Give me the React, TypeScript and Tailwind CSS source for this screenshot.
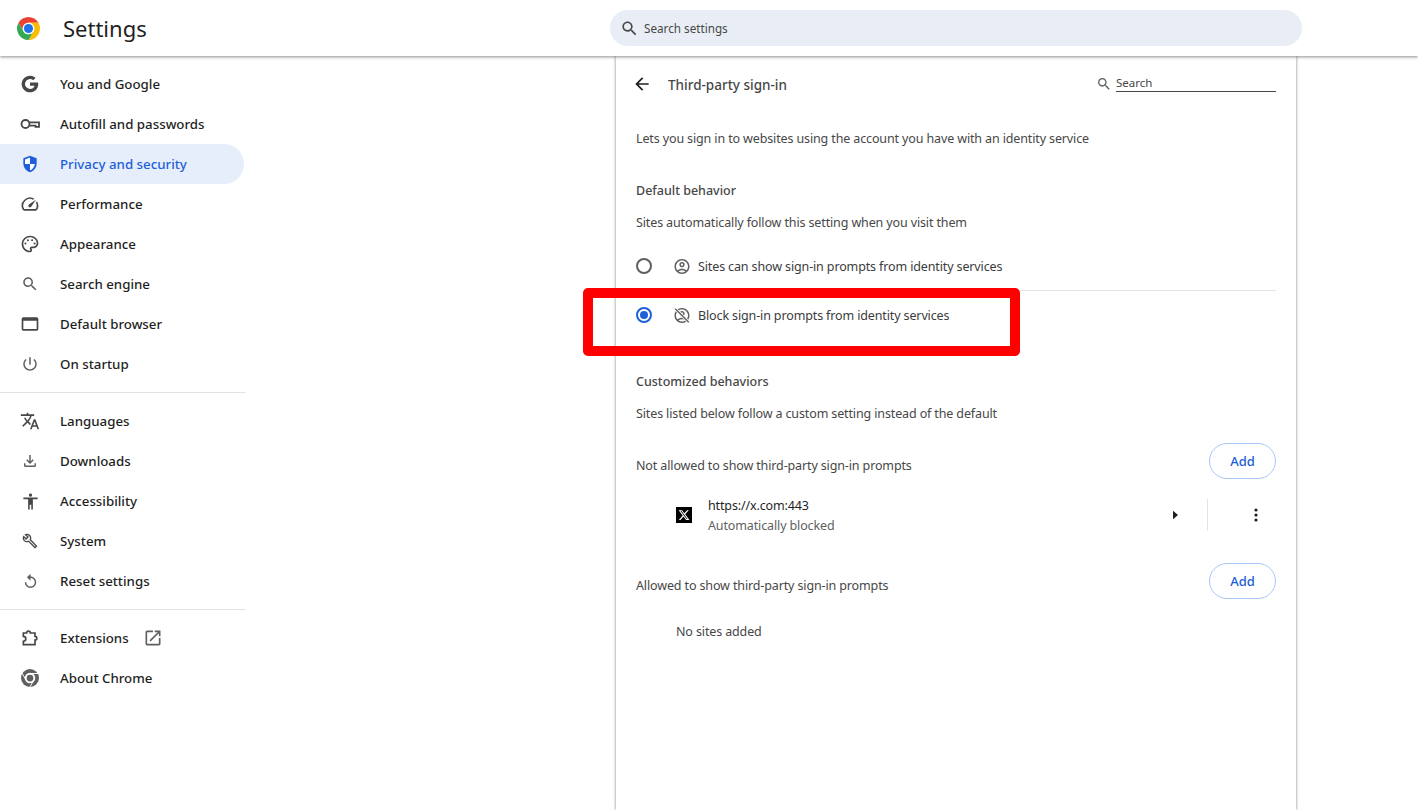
import type { ReactNode } from 'react';

const FONT = "font-['Noto_Sans',sans-serif]";

function Icon({ children, className = 'w-5 h-5 text-[#474747]' }: { children: ReactNode; className?: string }) {
  return (
    <svg viewBox="0 0 24 24" fill="currentColor" className={className}>
      {children}
    </svg>
  );
}

function ChromeLogo() {
  return (
    <svg viewBox="0 0 48 48" className="h-[23px] w-[23px]">
      <path fill="#ea4335" d="M3.22 12A24 24 0 0 1 44.78 12L24 12A12 12 0 0 0 13.6 30Z" />
      <path fill="#fbbc04" d="M44.78 12A24 24 0 0 1 24 48L34.4 30A12 12 0 0 0 24 12Z" />
      <path fill="#34a853" d="M24 48A24 24 0 0 1 3.22 12L13.6 30A12 12 0 0 0 34.4 30Z" />
      <circle cx="24" cy="24" r="12" fill="#fff" />
      <circle cx="24" cy="24" r="9.5" fill="#1a73e8" />
    </svg>
  );
}

function ChromeMono() {
  return (
    <svg viewBox="0 0 48 48" className="h-[18px] w-[18px] text-[#5f5f5f]">
      <circle cx="24" cy="24" r="24" fill="currentColor" />
      <circle cx="24" cy="24" r="14" fill="#fff" />
      <path stroke="#fff" strokeWidth="2.5" d="M24 12H46M34.4 30 23 49M13.6 30 2 10" />
      <circle cx="24" cy="24" r="9" fill="currentColor" />
    </svg>
  );
}

const searchPath =
  'M15.5 14h-.79l-.28-.27C15.41 12.59 16 11.11 16 9.5 16 5.91 13.09 3 9.5 3S3 5.91 3 9.5 5.91 16 9.5 16c1.61 0 3.09-.59 4.23-1.57l.27.28v.79l5 4.99L20.49 19l-4.99-5zm-6 0C7.01 14 5 11.99 5 9.5S7.01 5 9.5 5 14 7.01 14 9.5 11.99 14 9.5 14z';

const navIcons: Record<string, ReactNode> = {
  google: (
    <Icon>
      <path d="M21.6 10.2H12v3.9h5.5c-.6 2.4-2.7 3.9-5.5 3.9a6 6 0 1 1 3.9-10.6l2.8-2.8A10 10 0 1 0 12 22c5.2 0 9.9-3.7 9.9-10 0-.6-.1-1.2-.3-1.8z" />
    </Icon>
  ),
  key: (
    <svg viewBox="0 0 20 20" fill="none" stroke="currentColor" strokeWidth="1.8" className="h-5 w-5 text-[#474747]">
      <circle cx="5.5" cy="10" r="4" />
      <path d="M9.5 8.3H19V12.8H15.5V11.7H9.5" />
    </svg>
  ),
  shield: (
    <svg viewBox="0 0 24 24" className="h-5 w-5">
      <path fill="#1f5fd8" d="M12 2 4 5v6c0 5.1 3.4 9.6 8 11 4.6-1.4 8-5.9 8-11V5l-8-3z" />
      <path fill="#fff" d="M12 4.3 6 6.5V12h6V4.3zM12 12v7.8c3-1.1 5.3-4.3 5.9-7.8H12z" />
    </svg>
  ),
  speed: (
    <Icon>
      <path d="M20.38 8.57l-1.23 1.85a8 8 0 0 1-.22 7.58H5.07A8 8 0 0 1 15.58 6.85l1.85-1.23A10 10 0 0 0 3.35 19a2 2 0 0 0 1.72 1h13.85a2 2 0 0 0 1.74-1 10 10 0 0 0-.27-10.44z" />
      <path d="M10.59 15.41a2 2 0 0 0 2.83 0l5.66-8.49-8.49 5.66a2 2 0 0 0 0 2.83z" />
    </Icon>
  ),
  palette: (
    <Icon>
      <path d="M12 22C6.49 22 2 17.51 2 12S6.49 2 12 2s10 4.04 10 9c0 3.31-2.69 6-6 6h-1.77c-.28 0-.5.22-.5.5 0 .12.05.23.13.33.41.47.64 1.06.64 1.67A2.5 2.5 0 0 1 12 22zm0-18c-4.41 0-8 3.59-8 8s3.59 8 8 8c.28 0 .5-.22.5-.5a.54.54 0 0 0-.14-.35c-.41-.46-.63-1.05-.63-1.65a2.5 2.5 0 0 1 2.5-2.5H16c2.21 0 4-1.79 4-4 0-3.86-3.59-7-8-7z" />
      <circle cx="6.5" cy="11.5" r="1.2" />
      <circle cx="9.5" cy="7.5" r="1.2" />
      <circle cx="14.5" cy="7.5" r="1.2" />
      <circle cx="17.5" cy="11.5" r="1.2" />
    </Icon>
  ),
  search: (
    <Icon className="h-[18px] w-[18px] text-[#5f5f5f]">
      <path d={searchPath} />
    </Icon>
  ),
  browser: (
    <Icon>
      <path d="M20 4H4c-1.11 0-2 .9-2 2v12c0 1.1.89 2 2 2h16c1.1 0 2-.9 2-2V6c0-1.1-.89-2-2-2zm0 14H4V8h16v10z" />
    </Icon>
  ),
  power: (
    <Icon className="h-[18px] w-[18px] text-[#5f5f5f]">
      <path d="M13 3h-2v10h2V3zm4.83 2.17l-1.42 1.42C17.99 7.86 19 9.81 19 12c0 3.87-3.13 7-7 7s-7-3.13-7-7c0-2.19 1.01-4.14 2.58-5.42L6.17 5.17C4.23 6.82 3 9.26 3 12c0 4.97 4.03 9 9 9s9-4.03 9-9c0-2.74-1.23-5.18-3.17-6.83z" />
    </Icon>
  ),
  translate: (
    <Icon>
      <path d="M12.87 15.07l-2.54-2.51.03-.03c1.74-1.94 2.98-4.17 3.71-6.53H17V4h-7V2H8v2H1v1.99h11.17C11.5 7.92 10.44 9.75 9 11.35 8.07 10.32 7.3 9.19 6.69 8h-2c.73 1.63 1.73 3.17 2.98 4.56l-5.09 5.02L4 19l5-5 3.11 3.11.76-2.04zM18.5 10h-2L12 22h2l1.12-3h4.75L21 22h2l-4.5-12zm-2.62 7l1.62-4.33L19.12 17h-3.24z" />
    </Icon>
  ),
  download: (
    <Icon className="h-[18px] w-[18px] text-[#5f5f5f]">
      <path d="M18 15v3H6v-3H4v3c0 1.1.9 2 2 2h12c1.1 0 2-.9 2-2v-3h-2zm-1-4l-1.41-1.41L13 12.17V4h-2v8.17L8.41 9.59 7 11l5 5 5-5z" />
    </Icon>
  ),
  accessibility: (
    <Icon className="h-[19px] w-[19px] text-[#474747]">
      <path d="M12 2c1.1 0 2 .9 2 2s-.9 2-2 2-2-.9-2-2 .9-2 2-2zm9 7h-6v13h-2v-6h-2v6H9V9H3V7h18v2z" />
    </Icon>
  ),
  build: (
    <Icon className="h-4 w-4 text-[#474747]">
      <path d="M22.61 18.99l-9.08-9.08c.93-2.34.45-5.1-1.44-7C9.79.61 6.21.4 3.66 2.25L7.5 6.1 6.08 7.51 2.25 3.69C.4 6.23.61 9.82 2.91 12.11c1.86 1.86 4.57 2.35 6.89 1.48l9.11 9.11c.39.39 1.02.39 1.41 0l2.3-2.3c.4-.38.4-1.01-.01-1.41zm-3 1.6l-9.46-9.46c-.61.45-1.29.72-2 .82-1.36.2-2.79-.21-3.83-1.25C3.37 9.76 2.93 8.5 3 7.26l3.09 3.09 4.24-4.24-3.09-3.09c1.24-.07 2.49.37 3.44 1.31 1.08 1.08 1.49 2.57 1.24 3.96-.12.71-.42 1.37-.88 1.96l9.45 9.45-.88.89z" />
    </Icon>
  ),
  reset: (
    <Icon className="h-[17px] w-[17px] text-[#5f5f5f]">
      <path d="M12 5V1L7 6l5 5V7c3.31 0 6 2.69 6 6s-2.69 6-6 6-6-2.69-6-6H4c0 4.42 3.58 8 8 8s8-3.58 8-8-3.58-8-8-8z" />
    </Icon>
  ),
  extension: (
    <svg viewBox="0 0 24 24" fill="none" stroke="currentColor" strokeWidth="2" className="h-5 w-5 text-[#474747]">
      <path d="M4 6h4a2.2 2.2 0 0 1 4.4 0H18v4a2.2 2.2 0 0 1 0 4.4V20H4v-4a3 3 0 0 0 0-6z" />
    </svg>
  ),
  chrome: <ChromeMono />,
};

const topNav = [
  ['google', 'You and Google'],
  ['key', 'Autofill and passwords'],
  ['shield', 'Privacy and security'],
  ['speed', 'Performance'],
  ['palette', 'Appearance'],
  ['search', 'Search engine'],
  ['browser', 'Default browser'],
  ['power', 'On startup'],
];

const midNav = [
  ['translate', 'Languages'],
  ['download', 'Downloads'],
  ['accessibility', 'Accessibility'],
  ['build', 'System'],
  ['reset', 'Reset settings'],
];

function NavItem({ icon, label, children }: { icon: string; label: string; children?: ReactNode }) {
  const active = label === 'Privacy and security';
  return (
    <div
      className={`flex h-10 w-[244px] items-center rounded-r-full pl-5 text-[13.3px] font-medium ${
        active ? 'bg-[#e6eefb] text-[#1f5fd8]' : 'text-[#1f1f1f]'
      }`}
    >
      <span className="flex w-5 justify-center">{navIcons[icon]}</span>
      <span className="ml-5 mt-[2px]">{label}</span>
      {children}
    </div>
  );
}

function AddButton() {
  return (
    <button className="h-9 w-[67px] rounded-full border border-[#a8c7fa] pt-[2px] text-[13px] font-medium text-[#1f5fd8]">
      Add
    </button>
  );
}

function RadioRow({ selected, label, icon }: { selected?: boolean; label: string; icon: ReactNode }) {
  return (
    <div className="flex h-12 items-center">
      <span
        className={`flex h-4 w-4 items-center justify-center rounded-full border-2 ${
          selected ? 'border-[#1f5fd8]' : 'border-[#5f5f5f]'
        }`}
      >
        {selected && <span className="h-2 w-2 rounded-full bg-[#1f5fd8]" />}
      </span>
      <span className="ml-[21px] flex w-[18px] justify-center">{icon}</span>
      <span className="ml-[7px] mt-[2px] text-[12.5px] tracking-[-0.13px] text-[#3c3c3c]">{label}</span>
    </div>
  );
}

const accountPaths = (
  <>
    <path d="M12 2C6.48 2 2 6.48 2 12s4.48 10 10 10 10-4.48 10-10S17.52 2 12 2zM7.35 18.5C8.66 17.56 10.26 17 12 17s3.34.56 4.65 1.5c-1.31.94-2.91 1.5-4.65 1.5s-3.34-.56-4.65-1.5zm10.79-1.38C16.45 15.8 14.32 15 12 15s-4.45.8-6.14 2.12C4.7 15.73 4 13.95 4 12c0-4.42 3.58-8 8-8s8 3.58 8 8c0 1.95-.7 3.73-1.86 5.12z" />
    <path d="M12 6c-1.93 0-3.5 1.57-3.5 3.5S10.07 13 12 13s3.5-1.57 3.5-3.5S13.93 6 12 6zm0 5c-.83 0-1.5-.67-1.5-1.5S11.17 8 12 8s1.5.67 1.5 1.5S12.83 11 12 11z" />
  </>
);

export default function App() {
  return (
    <div className={`relative flex h-screen flex-col overflow-hidden bg-white ${FONT}`}>
      {/* Top bar */}
      <header className="relative z-10 flex h-14 shrink-0 items-center bg-white shadow-[0_1px_3px_rgba(0,0,0,0.45)]">
        <div className="flex w-[610px] items-center pl-[17px]">
          <ChromeLogo />
          <span className="ml-[23px] text-[22px] text-[#1f1f1f]">Settings</span>
        </div>
        <div className="flex h-9 w-[692px] items-center rounded-full bg-[#e9eef6] pl-[10px]">
          <Icon className="h-[19px] w-[19px] text-[#474747]">
            <path d={searchPath} />
          </Icon>
          <span className="ml-[5px] mt-[2px] text-[11.7px] text-[#474747]">Search settings</span>
        </div>
      </header>

      <div className="flex min-h-0 flex-1">
        {/* Sidebar */}
        <nav className="w-[246px] shrink-0 pt-2">
          {topNav.map(([icon, label]) => (
            <NavItem key={label} icon={icon} label={label} />
          ))}
          <div className="my-2 h-px w-[246px] bg-[#e3e3e3]" />
          {midNav.map(([icon, label]) => (
            <NavItem key={label} icon={icon} label={label} />
          ))}
          <div className="my-2 h-px w-[246px] bg-[#e3e3e3]" />
          <NavItem icon="extension" label="Extensions">
            <Icon className="ml-[14px] h-5 w-5 text-[#5f5f5f]">
              <path d="M19 19H5V5h7V3H5c-1.11 0-2 .9-2 2v14c0 1.1.89 2 2 2h14c1.1 0 2-.9 2-2v-7h-2v7zM14 3v2h3.59l-9.83 9.83 1.41 1.41L19 6.41V10h2V3h-7z" />
            </Icon>
          </NavItem>
          <NavItem icon="chrome" label="About Chrome" />
        </nav>

        {/* Main card */}
        <main className="ml-[370px] w-[680px] shrink-0 bg-white px-5 shadow-[0_0_3px_rgba(0,0,0,0.5)]">
          <div className="flex h-14 items-center">
            <Icon className="-ml-[4px] h-5 w-5 text-[#1f1f1f]">
              <path d="M20 11H7.83l5.59-5.59L12 4l-8 8 8 8 1.41-1.41L7.83 13H20v-2z" />
            </Icon>
            <span className="ml-4 mt-[2px] text-[13.5px] font-medium text-[#474747]">Third-party sign-in</span>
            <div className="ml-auto flex items-center">
              <Icon className="h-4 w-4 text-[#5f5f5f]">
                <path d={searchPath} />
              </Icon>
              <span className="ml-1 w-40 border-b border-[#474747] pb-px text-[11.5px] leading-[14px] text-[#474747]">
                Search
              </span>
            </div>
          </div>

          <p className="flex h-[52px] items-center pt-[2px] text-[12.5px] tracking-[-0.13px] text-[#474747]">
            Lets you sign in to websites using the account you have with an identity service
          </p>

          <h2 className="mt-[10px] flex h-8 items-center pt-[2px] text-[12.5px] font-medium text-[#474747]">
            Default behavior
          </h2>
          <p className="flex h-8 items-center pt-[2px] text-[12.5px] tracking-[-0.13px] text-[#474747]">
            Sites automatically follow this setting when you visit them
          </p>

          <div className="mt-1 border-b border-[#e3e3e3]">
            <RadioRow
              label="Sites can show sign-in prompts from identity services"
              icon={<Icon className="h-[19px] w-[19px] text-[#5f5f5f]">{accountPaths}</Icon>}
            />
          </div>
          <RadioRow
            selected
            label="Block sign-in prompts from identity services"
            icon={
              <Icon className="h-[19px] w-[19px] text-[#5f5f5f]">
                {accountPaths}
                <path d="M3 3 21 21" stroke="#fff" strokeWidth="4" />
                <path d="M3 3 21 21" stroke="currentColor" strokeWidth="1.8" />
              </Icon>
            }
          />

          <h2 className="mt-[26px] flex h-8 items-center pt-[2px] text-[12.5px] font-medium text-[#474747]">
            Customized behaviors
          </h2>
          <p className="flex h-8 items-center pt-[2px] text-[12.5px] tracking-[-0.13px] text-[#474747]">
            Sites listed below follow a custom setting instead of the default
          </p>

          <div className="mt-[14px] flex h-9 items-center justify-between">
            <span className="pt-[10px] text-[12.5px] tracking-[-0.13px] text-[#474747]">
              Not allowed to show third-party sign-in prompts
            </span>
            <AddButton />
          </div>

          <div className="mt-[6px] flex h-[60px] items-center pl-10">
            <span className="flex h-4 w-4 items-center justify-center bg-black">
              <svg viewBox="0 0 24 24" className="h-3 w-3" fill="#fff">
                <path d="M18.244 2.25h3.308l-7.227 8.26 8.502 11.24H16.17l-5.214-6.817L4.99 21.75H1.68l7.73-8.835L1.254 2.25H8.08l4.713 6.231zm-1.161 17.52h1.833L7.084 4.126H5.117z" />
              </svg>
            </span>
            <div className="ml-4 mt-[2px] text-[12.5px] leading-5 tracking-[-0.13px]">
              <div className="text-[#1f1f1f]">https://x.com:443</div>
              <div className="text-[#5f5f5f]">Automatically blocked</div>
            </div>
            <svg viewBox="0 0 8 12" className="ml-auto h-[10px] w-[7px] text-[#1f1f1f]" fill="currentColor">
              <path d="M1 1l6 5-6 5z" />
            </svg>
            <span className="ml-[28px] h-8 w-px bg-[#e3e3e3]" />
            <svg viewBox="0 0 4 14" className="ml-[46px] mr-[18px] h-[14px] w-1 text-[#1f1f1f]" fill="currentColor">
              <circle cx="2" cy="2" r="1.6" />
              <circle cx="2" cy="7" r="1.6" />
              <circle cx="2" cy="12" r="1.6" />
            </svg>
          </div>

          <div className="mt-[18px] flex h-9 items-center justify-between">
            <span className="pt-[10px] text-[12.5px] tracking-[-0.13px] text-[#474747]">
              Allowed to show third-party sign-in prompts
            </span>
            <AddButton />
          </div>

          <div className="mt-4 flex h-8 items-center pl-10 pt-[2px] text-[12.5px] tracking-[-0.13px] text-[#474747]">
            No sites added
          </div>
        </main>
      </div>

      {/* Red highlight drawn over the screenshot */}
      <div className="absolute left-[583px] top-[288px] h-[68px] w-[437px] rounded-[5px] border-[10px] border-[#ff0000]" />
    </div>
  );
}
